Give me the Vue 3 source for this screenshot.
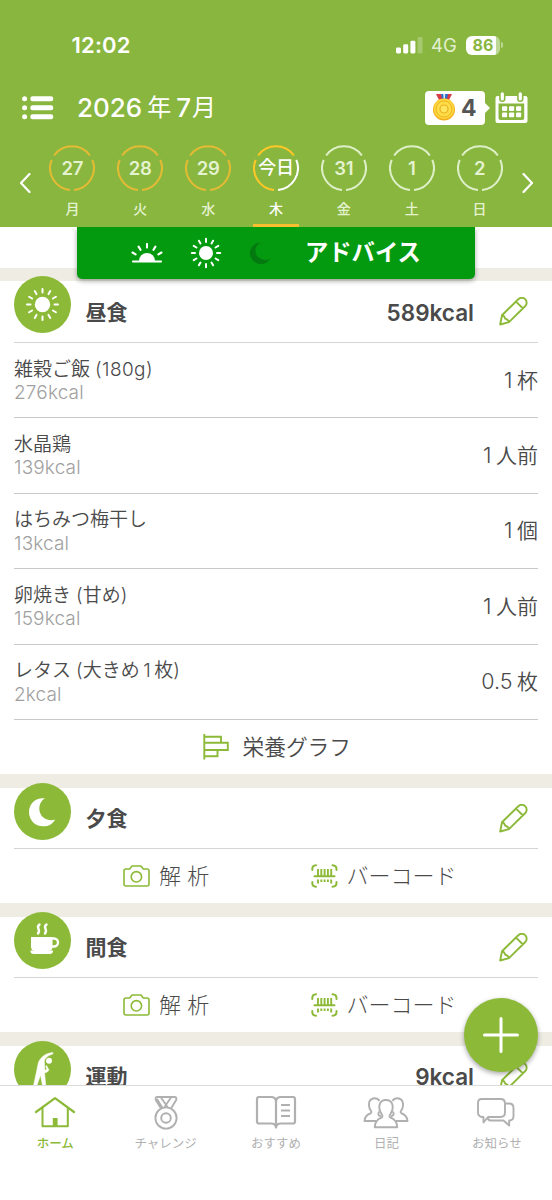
<script setup>
const days = [
  { n: '27', w: '月', a: 'y', b: 'y', c: 'y' },
  { n: '28', w: '火', a: 'y', b: 'y', c: 'y' },
  { n: '29', w: '水', a: 'y', b: 'y', c: 'y' },
  { n: '今日', w: '木', a: 'y', b: 'w', c: 'y', today: true },
  { n: '31', w: '金', a: 'w', b: 'w', c: 'w' },
  { n: '1', w: '土', a: 'w', b: 'w', c: 'w' },
  { n: '2', w: '日', a: 'w', b: 'w', c: 'w' },
]
const foods = [
  { name: ['雑穀ご飯', '(180g)'], kcal: '276kcal', num: '1', unit: '杯' },
  { name: ['水晶鶏'], kcal: '139kcal', num: '1', unit: '人前' },
  { name: ['はちみつ梅干し'], kcal: '13kcal', num: '1', unit: '個' },
  { name: ['卵焼き', '(甘め)'], kcal: '159kcal', num: '1', unit: '人前' },
  { name: ['レタス', '(大きめ', '1', '枚)'], kcal: '2kcal', num: '0.5', unit: '枚' },
]
const sections = [
  { id: 'lunch', title: '昼食', kcal: '589kcal' },
  { id: 'dinner', title: '夕食', kcal: '' },
  { id: 'snack', title: '間食', kcal: '' },
  { id: 'exercise', title: '運動', kcal: '9kcal' },
]
const rays = Array.from({ length: 12 }, (_, i) => i * 30)
const tabs = [
  { id: 'home', label: 'ホーム' },
  { id: 'medal', label: 'チャレンジ' },
  { id: 'book', label: 'おすすめ' },
  { id: 'people', label: '日記' },
  { id: 'chat', label: 'お知らせ' },
]
</script>

<template>
  <div class="phone">
    <header class="top">
      <div class="status">
        <span class="clock">12:02</span>
        <svg class="signal" width="27" height="17" viewBox="0 0 27 17" fill="#fff">
          <rect x="0" y="10.5" width="5" height="6" rx="1.4" />
          <rect x="7.2" y="7.3" width="5" height="9.2" rx="1.4" />
          <rect x="14.4" y="3.7" width="5" height="12.8" rx="1.4" />
          <rect x="21.6" y="0" width="5" height="16.5" rx="1.4" opacity=".25" />
        </svg>
        <span class="net">4G</span>
        <span class="battery"><span class="charge">86</span></span>
        <i class="nub"></i>
      </div>

      <div class="bar">
        <svg class="menu" width="32" height="24" viewBox="0 0 32 24" fill="#fff">
          <g v-for="y in [3, 12, 21]" :key="y">
            <circle cx="2.6" :cy="y - .2" r="2.5" />
            <rect x="8.3" :y="y - 2.7" width="23" height="5" rx="2.4" />
          </g>
        </svg>
        <h1 class="month"><span>2026</span><span class="kj">年</span><span class="sev">7</span><span class="kj">月</span></h1>
        <div class="badge">
          <svg width="24" height="28" viewBox="0 0 24 28">
            <path d="M4 0h5l4 8H8z" fill="#d83b46" />
            <path d="M20 0h-5l-4 8h5z" fill="#d83b46" />
            <path d="M9 0h7l-1.500 7h-4z" fill="#2d6dc9" />
            <path d="M11.200 0h2l-.3 5h-1.200z" fill="#d9ecff" />
            <circle cx="12" cy="15.500" r="11" fill="#f2ae1c" />
            <circle cx="12" cy="14.800" r="10.300" fill="#ffd63e" />
            <circle cx="12" cy="15" r="8" fill="#ffdc48" stroke="#eeb524" stroke-width="1" />
            <circle cx="12" cy="15" r="4" fill="#ffe65e" stroke="#eab024" stroke-width="1.200" />
          </svg>
          <b>4</b>
        </div>
        <svg class="cal" width="33" height="32" viewBox="0 0 33 32">
          <path d="M2.500 4H30.500a2 2 0 0 1 2 2V29a2 2 0 0 1-2 2H2.500a2 2 0 0 1-2-2V6a2 2 0 0 1 2-2z" fill="#fff" />
          <path d="M3.500 11.500H29.200V26a2 2 0 0 1-2 2H5.500a2 2 0 0 1-2-2z" fill="#88b63f" />
          <path d="M7.300 2.500V6.800M25.300 2.500V6.800" stroke="#88b63f" stroke-width="6.400" stroke-linecap="round" />
          <path d="M7.300 1.800V7M25.300 1.800V7" stroke="#fff" stroke-width="3.200" stroke-linecap="round" />
          <g fill="#fff">
            <rect v-for="k in 6" :key="k" :x="7 + ((k - 1) % 3) * 7" :y="k > 3 ? 20.500 : 14.300" width="5.200" height="4.700" rx="1" />
          </g>
        </svg>
      </div>

      <div class="week">
        <svg class="arrow" width="12" height="20" viewBox="0 0 12 20"><path d="M10.500 1L2 10l8.500 9" /></svg>
        <div class="days">
          <div v-for="d in days" :key="d.w" class="day" :class="{ today: d.today }">
            <div class="ring">
              <svg width="46" height="46" viewBox="0 0 46 46">
                <path :class="d.a" d="M5.100 10.500A21.900 21.900 0 0 1 40.900 10.500" />
                <path :class="d.b" d="M43.300 14.800A21.900 21.900 0 0 1 25 44.900" />
                <path :class="d.c" d="M21 44.900A21.900 21.900 0 0 1 2.700 14.800" />
              </svg>
              <span>{{ d.n }}</span>
            </div>
            <span class="wd">{{ d.w }}</span>
          </div>
        </div>
        <svg class="arrow" width="12" height="20" viewBox="0 0 12 20"><path d="M1.500 1L10 10l-8.500 9" /></svg>
      </div>

      <div class="advice">
        <svg class="rise" width="32" height="20" viewBox="0 0 32 20">
          <path d="M8 18a8 8 0 0 1 16 0z" fill="#fff" />
          <g stroke="#fff" stroke-width="2.100" stroke-linecap="round">
            <path d="M2 18.500H30M16 1V4.600M7.600 3.600L9.500 6.800M24.400 3.600L22.500 6.800M1.500 9.500L4.600 11.400M30.500 9.500L27.400 11.400" />
          </g>
        </svg>
        <svg class="sun" width="32" height="32" viewBox="-16 -16 32 32">
          <circle r="7" fill="#fff" />
          <path v-for="r in rays" :key="r" d="M0 -11V-14.200" :transform="`rotate(${r})`" stroke="#fff" stroke-width="2" stroke-linecap="round" />
        </svg>
        <svg class="dim" width="22" height="23" viewBox="0 0 28 30">
          <path d="M16 1C7 3 5 16 13.500 21C18 24 23 24 27 22C24 28 17 30.500 10.500 28C3 25 -1 17 1.500 10C4 4 9 .5 16 1Z" fill="#04790f" />
        </svg>
        <span>アドバイス</span>
      </div>
    </header>

    <main class="feed">
      <div class="prev"></div>
      <section v-for="s in sections" :key="s.id" class="card" :class="s.id">
        <div class="head">
          <div class="disc">
            <svg v-if="s.id === 'lunch'" width="57" height="57" viewBox="-28.500 -28.500 57 57">
              <circle r="7.700" fill="#fff" />
              <path v-for="r in rays" :key="r" d="M0 -12V-15.500" :transform="`rotate(${r})`" stroke="#fff" stroke-width="2" stroke-linecap="round" />
            </svg>
            <svg v-if="s.id === 'dinner'" width="57" height="57" viewBox="0 0 57 57">
              <path d="M31 15.300C23 20 23.500 33 32.500 36.200C36 37.600 39 37.200 41 36.500C38.500 41.500 34 43.500 29 43.300C21 43.300 15 37 15 29C15 20.500 22 14 31 15.300Z" fill="#fff" />
            </svg>
            <svg v-if="s.id === 'snack'" width="57" height="57" viewBox="0 0 57 57">
              <path d="M17 25H38.500V34.500Q38.500 39 34 39H21.500Q17 39 17 34.500Z" fill="#fff" />
              <path d="M38 26.500H40a3.500 3.500 0 0 1 0 8h-2" fill="none" stroke="#fff" stroke-width="2.400" />
              <path d="M16.500 38.500H39V40Q38 42 36 42H19.500Q17 42 16.500 40Z" fill="#fff" />
              <path d="M25.500 12.500C21 16 27.500 17 24 21.500M32.500 12.500C28 16 34.500 17 31 21.500" fill="none" stroke="#fff" stroke-width="2.400" stroke-linecap="round" />
            </svg>
            <svg v-if="s.id === 'exercise'" width="57" height="57" viewBox="0 0 57 57">
              <circle cx="35" cy="19.800" r="3" fill="#fff" />
              <path d="M38.800 11.500C31 12.500 26 16.500 24.200 22.500L22.500 31L19 47H22L26.500 34L29 47H32L30.500 32L33 31Q35.200 30 34.700 28.500L32.500 24.500L31.700 25.500L33 28.300L30.800 29.300L30.300 21C30.300 17 34 14.300 38.800 13Z" fill="#fff" stroke="#fff" stroke-width=".6" stroke-linejoin="round" />
            </svg>
          </div>
          <h2>{{ s.title }}</h2>
          <strong>{{ s.kcal }}</strong>
          <svg class="pencil" width="29" height="29" viewBox="0 0 29 29">
            <path d="M1.200 27.500L3 18.300L19.300 2.300A4.800 4.800 0 0 1 26.300 9L10 25.200ZM3 18.300C5.500 18.500 5.500 20.500 6.300 21.700C8 22.300 9.600 23 10 25.200M17 4.600L24 11.500" />
          </svg>
        </div>

        <template v-if="s.id === 'lunch'">
          <div v-for="f in foods" :key="f.name[0]" class="food">
            <div class="info">
              <p class="name"><span v-for="p in f.name" :key="p">{{ p }}</span></p>
              <p class="cal-count">{{ f.kcal }}</p>
            </div>
            <p class="qty"><span>{{ f.num }}</span><span class="unit">{{ f.unit }}</span></p>
          </div>
          <div class="graph">
            <svg width="26" height="26" viewBox="0 0 26 26" fill="none" stroke="#8cba38" stroke-width="1.900">
              <path d="M1.300 0V25.500M1.300 2.800H18V8.500M1.300 8.800H24.800V16H1.300M14.500 16V22.200H1.300" />
            </svg>
            <span>栄養グラフ</span>
          </div>
        </template>

        <div v-if="s.id === 'dinner' || s.id === 'snack'" class="actions">
          <div class="act scan">
            <svg width="27" height="22" viewBox="0 0 27 22" fill="none" stroke="#8cba38" stroke-width="1.600">
              <path d="M3 4H6.700L9 1H18L20.300 4H24Q26 4 26 6V19Q26 21 24 21H3Q1 21 1 19V6Q1 4 3 4Z" stroke-linejoin="round" />
              <circle cx="13.400" cy="11.800" r="5.200" />
            </svg>
            <span>解 析</span>
          </div>
          <div class="act code">
            <svg width="27" height="24" viewBox="0 0 27 24" fill="none" stroke="#8cba38" stroke-width="2">
              <path d="M1.300 6V5Q1.300 1.500 5 1.300M21.500 1.300Q25.500 1.500 25.500 5V6M1.300 18V19Q1.300 22.500 5 22.700M21.500 22.700Q25.500 22.500 25.500 19V18" stroke-linecap="round" />
              <path d="M3.500 12.300H23.500" stroke-linecap="round" />
              <path d="M7 5V12M20.200 5V12M7 15.500V19.500M20.200 15.500V19.500" stroke-width="1.900" />
              <path d="M10.300 5V12M13.600 5V12M16.900 5V12M10.300 15.500V18M13.600 15.500V18M16.900 15.500V18" stroke-width="1.900" />
            </svg>
            <span>バーコード</span>
          </div>
        </div>
      </section>
    </main>

    <button class="fab" aria-label="追加">
      <svg width="36" height="36" viewBox="0 0 36 36"><path d="M18 1.500V34.500M1.500 18H34.500" stroke="#fff" stroke-width="3" stroke-linecap="round" /></svg>
    </button>

    <nav class="tabs">
      <div v-for="t in tabs" :key="t.id" class="tab" :class="{ on: t.id === 'home' }">
        <svg v-if="t.id === 'home'" width="44" height="34" viewBox="0 0 44 34">
          <path d="M3 16L22 2.200L41 16" stroke-width="2.200" stroke-linecap="round" />
          <path d="M9.500 12V30.300H34.800V12" stroke-width="2" />
          <path d="M19.800 30V22H24.600V30Z" fill="currentColor" stroke="none" />
        </svg>
        <svg v-if="t.id === 'medal'" width="44" height="34" viewBox="0 0 44 34">
          <circle cx="22" cy="22" r="10.600" />
          <circle cx="22" cy="22" r="4.800" />
          <path d="M17 12.500L11.800 4Q11 1 13.500 1H30.500Q33 1 32.200 4L27 12.500M17 1.500L23.500 11M27 1.500L20.500 11M13 3L18.500 12" />
        </svg>
        <svg v-if="t.id === 'book'" width="44" height="34" viewBox="0 0 44 34">
          <path d="M22 31.500Q21.500 27.500 17 27.500H5Q3 27.500 3 25.500V3Q3 1 5 1H17Q22 1 22 6ZM22 31.500Q22.500 27.500 27 27.500H39Q41 27.500 41 25.500V3Q41 1 39 1H27Q22 1 22 6" stroke-width="2.200" />
          <path d="M27 9H36M27 14.500H36M27 20H36" stroke-width="2.200" />
        </svg>
        <svg v-if="t.id === 'people'" width="46" height="34" viewBox="0 0 46 34">
          <path d="M11.800 31.300Q12 24 18.500 21.700Q20.300 20.500 18.700 18.300C14.500 12 15.800 4 23 4S31.500 12 27.300 18.300Q25.700 20.500 27.500 21.700Q34 24 34.200 31.300Z" />
          <path d="M16.500 5C13.500 .5 5.800 1.500 5.900 9C6 12 7.200 14 8.300 15.300Q8.800 16.800 7.300 17.500Q1.800 19.500 1.500 25H13M29.500 5C32.500 .5 40.200 1.500 40.100 9C40 12 38.800 14 37.700 15.300Q37.200 16.800 38.700 17.500Q44.200 19.500 44.500 25H33M16 15.500L15.300 18Q15.500 19.500 18 20.500M30 15.500L30.700 18Q30.500 19.500 28 20.500" />
        </svg>
        <svg v-if="t.id === 'chat'" width="44" height="34" viewBox="0 0 44 34">
          <path d="M6.500 3H25.500Q30 3 30 7.500V16.500Q30 21 25.500 21H13L8.500 26.500V21H6.500Q3 20 3 16.500V7Q3 3 6.500 3Z" />
          <path d="M31 7.500H34Q38.500 7.500 38.500 12V20Q38.500 24 35 24.500H34.200V29.500L28.500 24.500H15.500Q13 24.300 12.500 21.500" />
        </svg>
        <span>{{ t.label }}</span>
      </div>
    </nav>
  </div>
</template>

<style>
body { margin: 0; background: #fff; }
</style>

<style scoped>
.phone { position: relative; width: 552px; height: 1200px; overflow: hidden; display: flex; flex-direction: column; background: #fff; color: #4a4a4a; font-family: Inter, "Noto Sans CJK JP", sans-serif; }
svg { display: block; flex: none; }
h1, h2, p { margin: 0; font-weight: inherit; }
span, strong { white-space: nowrap; }

.top { position: relative; z-index: 2; height: 227px; flex: none; background: #88b63f; color: #fff; display: flex; flex-direction: column; }
.status { height: 90px; display: flex; align-items: center; box-sizing: border-box; padding-left: 71.500px; }
.clock { width: 324.500px; font-size: 22px; font-weight: 600; line-height: 26px; letter-spacing: .2px; }
.signal { margin-top: 1px; }
.net { width: 35px; margin-left: 8px; font-size: 18.500px; color: #e2efcf; letter-spacing: 0; }
.battery { width: 34px; height: 19px; border-radius: 6px; overflow: hidden; background: linear-gradient(90deg, #fff 30px, #bdd794 30px); }
.charge { display: block; width: 34px; text-align: center; font-size: 16px; font-weight: 700; line-height: 19px; color: #88b63f; }
.nub { width: 2px; height: 6px; margin-left: 1px; border-radius: 0 3px 3px 0; background: #bdd794; }

.bar { height: 36px; display: flex; align-items: center; padding: 0 25px 0 22px; }
.month { display: flex; align-items: center; width: 348px; margin-left: 23px; font-size: 26px; line-height: 36px; font-weight: 450; }
.month .kj { margin-left: 5px; font-size: 24px; font-weight: 400; }
.month .sev { margin-left: 5px; }
.month .sev + .kj { margin-left: 1px; }
.badge { flex: none; position: relative; display: flex; align-items: center; width: 60px; height: 34px; border-radius: 4px; background: #fff; box-sizing: border-box; padding-left: 7px; }
.badge::after { content: ""; position: absolute; left: 60px; top: 12px; border: 5px solid transparent; border-left-color: #fff; border-right: 0; }
.badge b { margin-left: 5px; font-size: 23px; line-height: 34px; color: #555; }
.month { flex: none; }
.cal { margin-left: 9.500px; }

.week { height: 101px; display: flex; align-items: flex-start; padding: 0 18.500px; }
.arrow { margin-top: 47px; fill: none; stroke: #fff; stroke-width: 2.200; stroke-linecap: round; stroke-linejoin: round; }
.days { flex: none; width: 475px; margin: 0 8px 0 8px; display: grid; grid-template-columns: repeat(7, 1fr); }
.day { display: flex; flex-direction: column; align-items: center; height: 101px; box-sizing: border-box; padding-top: 19px; color: #e5f2d0; }
.ring { position: relative; width: 46px; height: 46px; }
.ring path { fill: none; stroke-width: 2; }
.ring .y { stroke: #e5bb35; }
.ring .w { stroke: #dff0c8; }
.ring span { position: absolute; inset: 0; text-align: center; font-size: 18.500px; line-height: 46px; font-weight: 600; letter-spacing: -.2px; }
.wd { margin-top: 8px; font-size: 14px; line-height: 20px; font-weight: 500; width: 46px; height: 25px; box-sizing: border-box; text-align: center; }
.day.today { color: #fff; }
.today .ring span { font-size: 18px; letter-spacing: -.3px; font-weight: 500; }
.today .ring .y { stroke: #ffc727; }
.today .ring .w { stroke: #fff; }
.today .wd { height: 28px; border-bottom: 3px solid #f8bf2f; }

.advice { position: absolute; left: 77px; top: 227px; width: 398px; height: 52px; box-sizing: border-box; padding-left: 54px; display: flex; align-items: center; border-radius: 0 0 5px 5px; background: #049a10; box-shadow: 0 2px 5px rgba(0, 0, 0, .35); clip-path: inset(0 -10px -12px -10px); }
.sun { margin-left: 27px; }
.dim { margin-left: 27px; }
.advice span { margin-left: 34px; font-size: 23.300px; line-height: 52px; font-weight: 700; }

.feed { height: 858px; flex: none; overflow: hidden; }
.prev { height: 41px; }
.card { border-top: 14px solid #efece4; }
.card.lunch { border-top-width: 13px; }
.head { height: 61px; margin: 0 14px; box-sizing: border-box; display: flex; align-items: flex-start; border-bottom: 1px solid #d4d4d4; }
.lunch .head { height: 62px; }
.disc { width: 57px; height: 57px; flex: none; margin-top: -5px; border-radius: 50%; background: #8cba38; }
.head h2 { margin-left: 14.500px; font-size: 21px; line-height: 31px; margin-top: 15px; font-weight: 700; }
.lunch .head h2 { margin-top: 16px; }
.head strong { margin-left: auto; margin-top: 15.500px; font-size: 22.500px; line-height: 31px; font-weight: 600; }
.pencil { margin: 16px 10px 0 25px; fill: none; stroke: #8cba38; stroke-width: 1.900; stroke-linejoin: round; }
.food { height: 75.400px; margin: 0 14px; box-sizing: border-box; display: flex; justify-content: space-between; border-bottom: 1px solid #c8c8c8; }
.name { display: flex; margin-top: 13.500px; font-size: 19px; line-height: 25px; font-weight: 350; }
.name span + span { margin-left: 5px; }
.food:nth-of-type(2) .name span + span { letter-spacing: .4px; }
.name span:nth-child(3), .name span:nth-child(4) { margin-left: 3.500px; }
.cal-count { font-size: 19px; line-height: 23px; font-weight: 300; letter-spacing: .15px; color: #a0a0a0; margin-top: -.5px; }
.qty { display: flex; margin-top: 22.500px; font-size: 21.500px; line-height: 29px; font-weight: 350; }
.unit { margin-left: 4.500px; font-size: 21px; }
.graph { height: 54px; display: flex; align-items: center; padding-left: 203px; font-size: 21.700px; }
.graph span { margin: -3px 0 0 13.500px; font-weight: 350; }
.actions { height: 54px; display: flex; align-items: center; }
.act { display: flex; align-items: center; font-size: 22px; font-weight: 300; }
.act.scan { width: 188px; padding-left: 123px; }
.act span { margin: -3px 0 0 9px; }
.act.code span { margin-left: 8.500px; }

.fab { position: absolute; z-index: 3; left: 464px; top: 998px; width: 74px; height: 74px; padding: 0; border: 0; border-radius: 50%; background: #8cba38; display: flex; align-items: center; justify-content: center; box-shadow: 0 2px 5px rgba(0, 0, 0, .35); }
.tabs { position: relative; height: 115px; box-sizing: border-box; border-top: 1px solid #dcdcdc; background: #fff; display: grid; grid-template-columns: repeat(5, 1fr); }
.tab { display: flex; flex-direction: column; align-items: center; padding-top: 9.500px; color: #b0b0b0; }
.tab svg { fill: none; stroke: currentColor; stroke-width: 1.900; stroke-linejoin: round; }
.tab span { margin-top: 5px; font-size: 12.500px; line-height: 18px; }
.tab.on { color: #8cba38; }
.tab.on span { font-weight: 500; }
</style>
